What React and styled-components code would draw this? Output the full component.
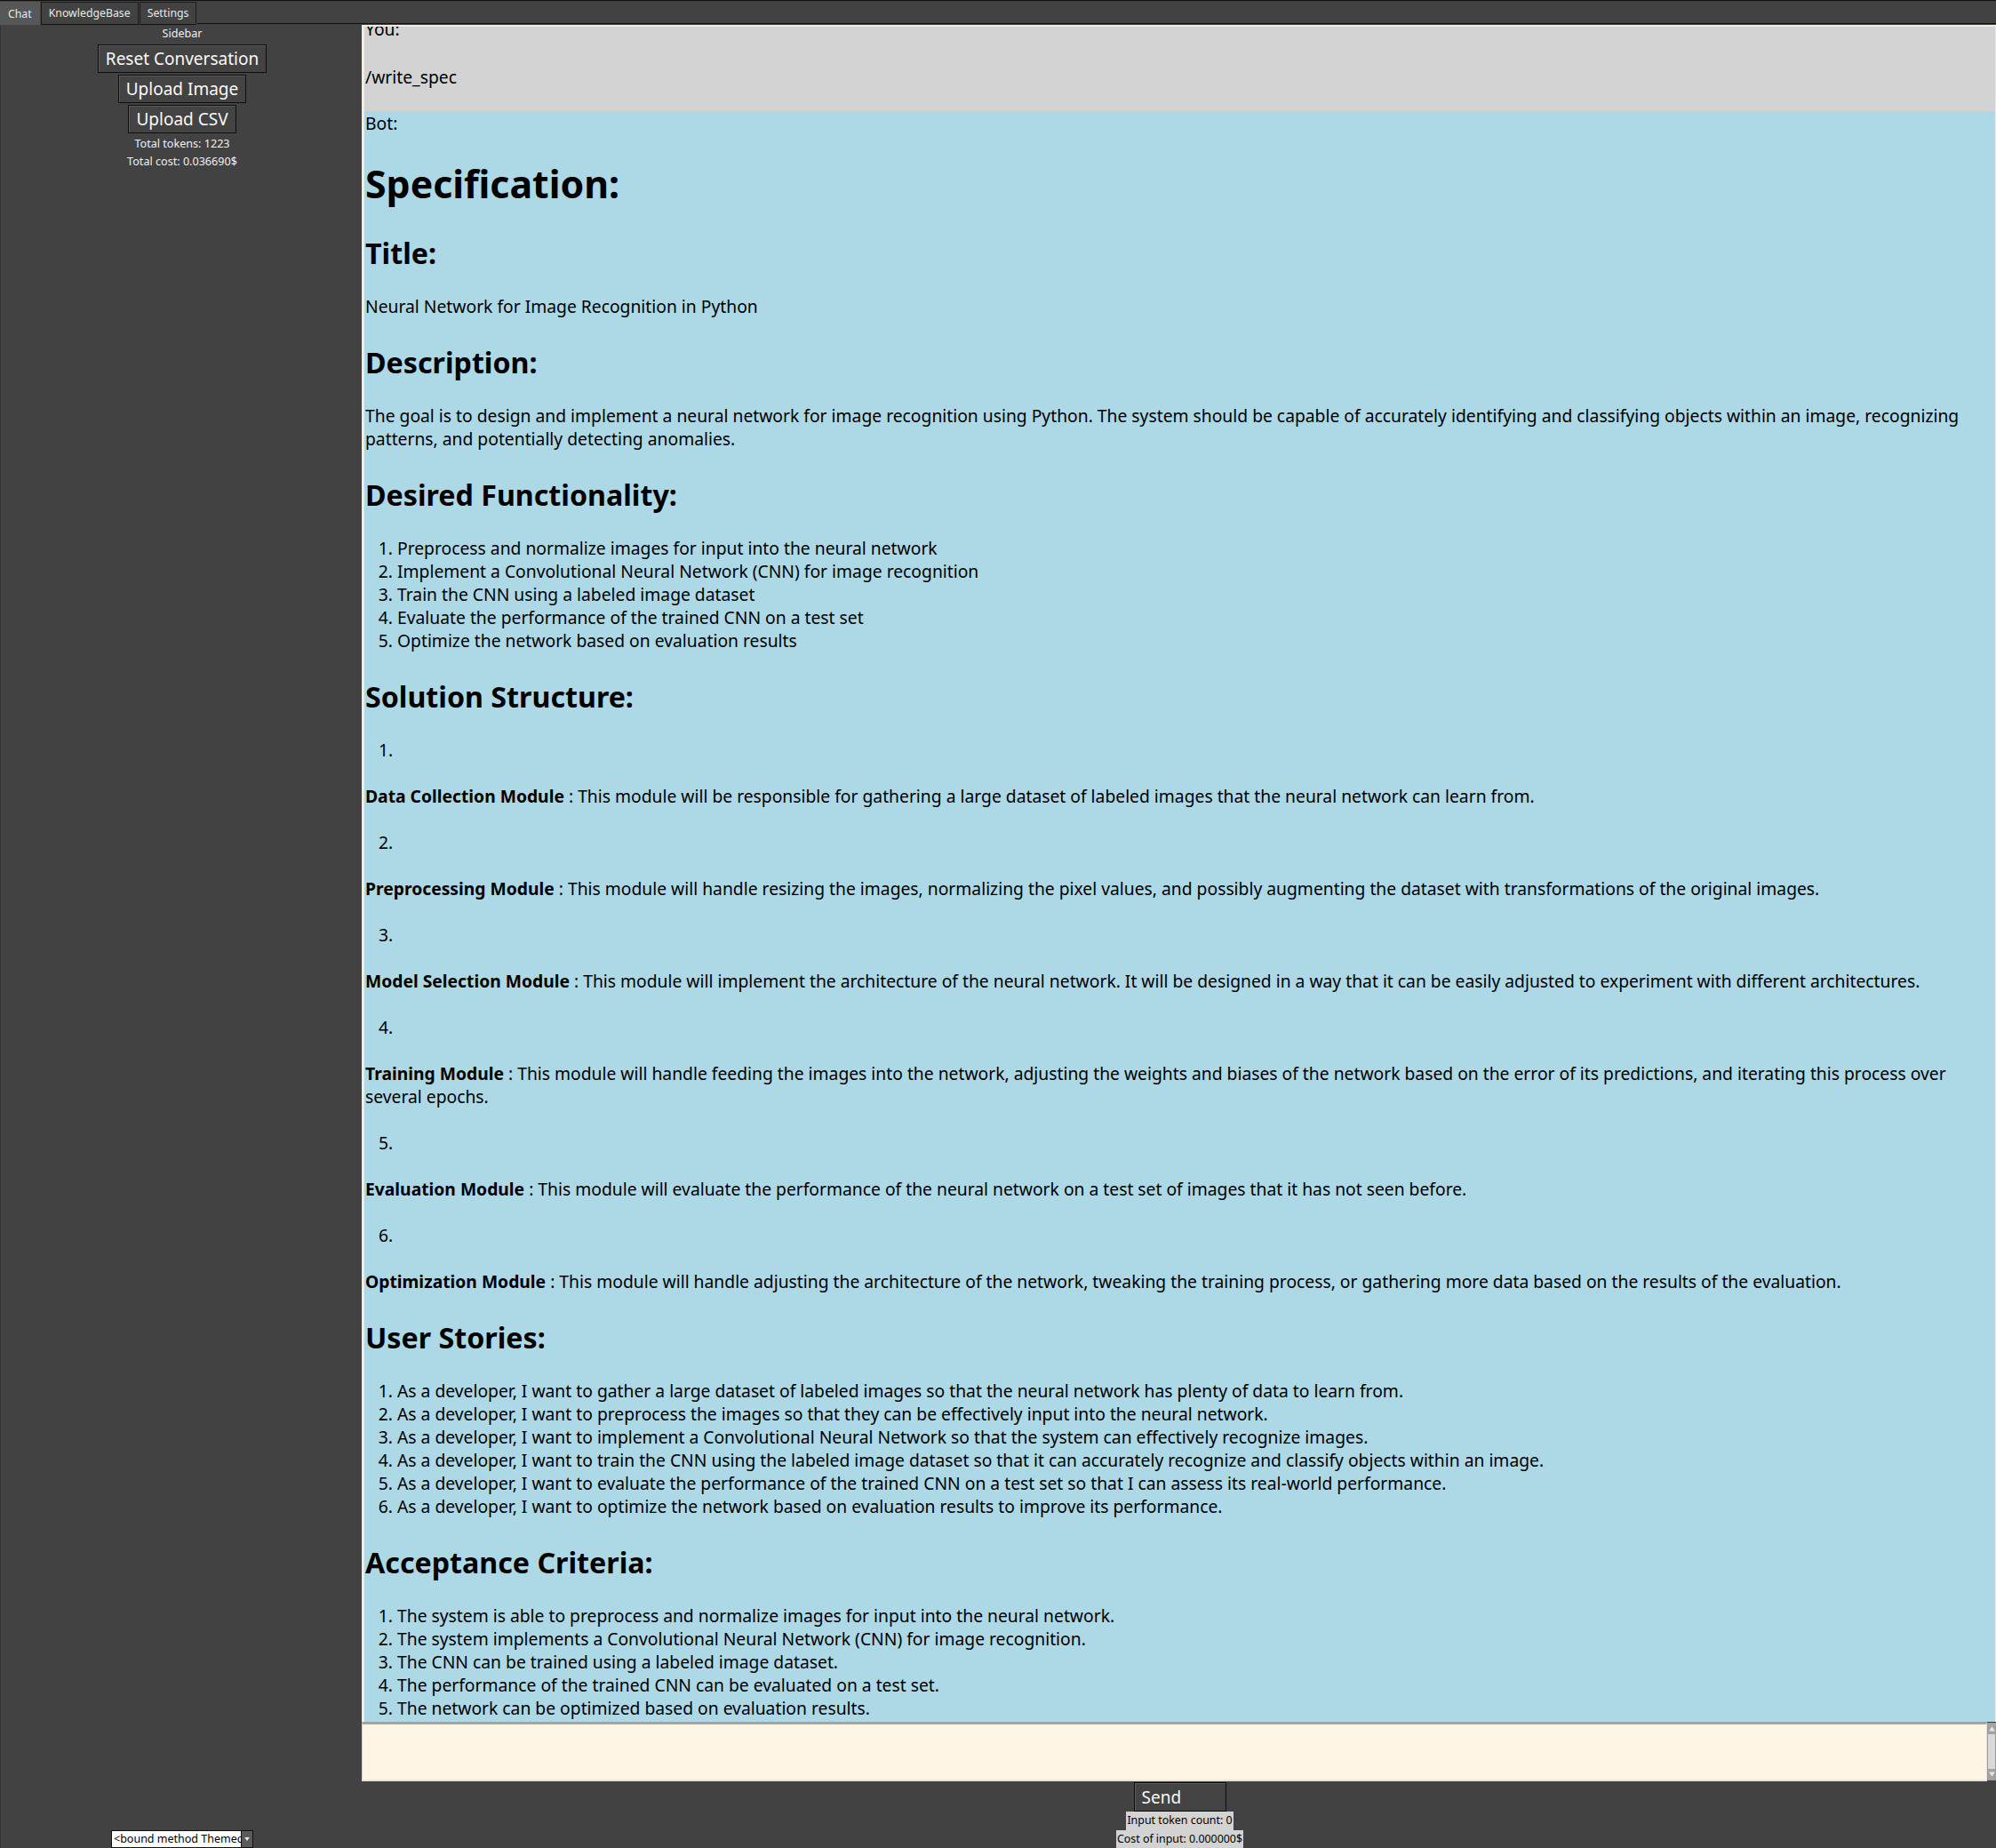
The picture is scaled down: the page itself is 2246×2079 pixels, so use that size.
import React from "react";
import styled, { createGlobalStyle } from "styled-components";

const Global = createGlobalStyle`
  html, body { margin: 0; padding: 0; background: #424242; }
  body { font-family: "Noto Sans", "DejaVu Sans", sans-serif; overflow: hidden; }
  * { box-sizing: border-box; }
`;

const Window = styled.div`
  width: 2246px;
  height: 2079px;
  display: flex;
  flex-direction: column;
  background: #424242;
  overflow: hidden;
`;

const TabBar = styled.div`
  display: flex;
  height: 28px;
  border-top: 1px solid #111;
  flex: none;
`;

const Tab = styled.div`
  display: flex;
  align-items: center;
  padding: 0 8px 1px;
  margin-right: 1px;
  font-size: 12.3px;
  color: #e8e8e8;
  background: ${(p) => (p.$active ? "#575757" : "#424242")};
  border: 1px solid ${(p) => (p.$active ? "#575757" : "#1b1b1b")};
  border-bottom: ${(p) => (p.$active ? "none" : "1px solid #111")};
  margin-top: 1px;
`;

const TabFiller = styled.div`
  flex: 1;
  border-bottom: 1px solid #111;
  margin-bottom: 1px;
`;

const Body = styled.div`
  flex: 1;
  display: flex;
  min-height: 0;
  border-left: 1px solid #333;
`;

const Sidebar = styled.aside`
  width: 405px;
  flex: none;
  display: flex;
  flex-direction: column;
  align-items: center;
  padding-left: 3px;
  color: #f0f0f0;
`;

const SideLabel = styled.div`
  font-size: 12.6px;
  line-height: 20px;
  height: 20px;
  margin-top: ${(p) => p.$gap || 0}px;
`;

const TkButton = styled.button`
  font-family: "Noto Sans", sans-serif;
  font-size: 19px;
  line-height: 24px;
  color: #f9f9f9;
  background: #434343;
  border: 1px solid #0e0e0e;
  box-shadow: inset 1px 1px 0 #5a5a5a;
  padding: 3px 8px;
  margin-top: 2px;
  cursor: pointer;
`;

const SendButton = styled(TkButton)`
  width: 104px;
  height: 33px;
  text-align: left;
  padding: 2px 8px;
  margin-top: 1px;
`;

const Combo = styled.div`
  margin-top: auto;
  display: flex;
  width: 160px;
  height: 20px;
  border: 1px solid #111;
  background: #fff;
`;

const ComboField = styled.div`
  flex: 1;
  font-size: 12.5px;
  line-height: 18px;
  color: #000;
  padding-left: 2px;
  white-space: nowrap;
  overflow: hidden;
`;

const ComboArrow = styled.div`
  width: 13px;
  background: #5a5a5a;
  border-left: 1px solid #111;
  display: flex;
  align-items: center;
  justify-content: center;
`;

const Main = styled.main`
  flex: 1;
  min-width: 0;
  display: flex;
  flex-direction: column;
`;

const ChatView = styled.section`
  flex: 1;
  min-height: 0;
  overflow: hidden;
  margin-left: 1px;
  border-top: 2px solid #f1ece3;
  border-left: 3px solid #f1ece3;
  border-right: 1px solid #f1ece3;
  color: #000;
  font-size: 19.3px;
  line-height: 26px;
`;

const ChatScroll = styled.div`
  margin-top: -10px;
`;

const UserMsg = styled.div`
  background: #d3d3d3;
  padding: 0 1px 25px;
`;

const BotMsg = styled.div`
  background: #add8e6;
  padding: 1px 1px 30px;
`;

const Who = styled.div`
  line-height: 26px;
`;

const Para = styled.p`
  margin: 26px 0 0;
`;

const UserText = styled.p`
  margin: 28px 0 0;
`;

const H1 = styled.h1`
  margin: 26px 0 0;
  font-size: 42.8px;
  line-height: 57px;
  font-weight: 700;
`;

const H2 = styled.h2`
  margin: 28px 0 -1px;
  font-size: 32.2px;
  line-height: 44px;
  font-weight: 700;
`;

const List = styled.ol`
  margin: 26px 0 0;
  padding: 0 0 0 36px;
  li { line-height: 26px; }
`;

const ModuleNumber = styled.div`
  margin-top: 26px;
  padding-left: 15px;
`;

const InputRow = styled.div`
  height: 67px;
  flex: none;
  display: flex;
  margin-left: 1px;
`;

const TextArea = styled.div`
  flex: 1;
  background: #fdf5e6;
  border-top: 3px solid #a8a39b;
  border-left: 1px solid #d9d3c9;
  border-bottom: 2px solid #ebe3d7;
  border-right: 1px solid #ebe3d7;
`;

const Scrollbar = styled.div`
  width: 10px;
  margin-top: 1px;
  margin-bottom: 1px;
  display: flex;
  flex-direction: column;
  background: #d9d9d9;
  border: 1px solid #9a9a9a;
`;

const ScrollArrow = styled.div`
  height: 12px;
  background: #a3a3a3;
  display: flex;
  align-items: center;
  justify-content: center;
`;

const ScrollTrough = styled.div`
  flex: 1;
  background: #d9d9d9;
`;

const Controls = styled.div`
  height: 75px;
  flex: none;
  display: flex;
  flex-direction: column;
  align-items: center;
  padding-left: 3px;
`;

const StatLabel = styled.div`
  background: #d3d3d3;
  color: #000;
  font-size: 12.4px;
  line-height: 20px;
  height: ${(p) => (p.$h || 21)}px;
  padding: 0 1px;
`;

const modules = [
  ["Data Collection Module", "This module will be responsible for gathering a large dataset of labeled images that the neural network can learn from."],
  ["Preprocessing Module", "This module will handle resizing the images, normalizing the pixel values, and possibly augmenting the dataset with transformations of the original images."],
  ["Model Selection Module", "This module will implement the architecture of the neural network. It will be designed in a way that it can be easily adjusted to experiment with different architectures."],
  ["Training Module", "This module will handle feeding the images into the network, adjusting the weights and biases of the network based on the error of its predictions, and iterating this process over several epochs."],
  ["Evaluation Module", "This module will evaluate the performance of the neural network on a test set of images that it has not seen before."],
  ["Optimization Module", "This module will handle adjusting the architecture of the network, tweaking the training process, or gathering more data based on the results of the evaluation."],
];

const functionality = [
  "Preprocess and normalize images for input into the neural network",
  "Implement a Convolutional Neural Network (CNN) for image recognition",
  "Train the CNN using a labeled image dataset",
  "Evaluate the performance of the trained CNN on a test set",
  "Optimize the network based on evaluation results",
];

const stories = [
  "As a developer, I want to gather a large dataset of labeled images so that the neural network has plenty of data to learn from.",
  "As a developer, I want to preprocess the images so that they can be effectively input into the neural network.",
  "As a developer, I want to implement a Convolutional Neural Network so that the system can effectively recognize images.",
  "As a developer, I want to train the CNN using the labeled image dataset so that it can accurately recognize and classify objects within an image.",
  "As a developer, I want to evaluate the performance of the trained CNN on a test set so that I can assess its real-world performance.",
  "As a developer, I want to optimize the network based on evaluation results to improve its performance.",
];

const criteria = [
  "The system is able to preprocess and normalize images for input into the neural network.",
  "The system implements a Convolutional Neural Network (CNN) for image recognition.",
  "The CNN can be trained using a labeled image dataset.",
  "The performance of the trained CNN can be evaluated on a test set.",
  "The network can be optimized based on evaluation results.",
];

const Tri = ({ dir = "down", color = "#eee", w = 7, h = 5 }) => (
  <svg width={w} height={h} viewBox="0 0 7 5">
    {dir === "down" ? (
      <polygon points="0,0 7,0 3.5,5" fill={color} />
    ) : (
      <polygon points="0,5 7,5 3.5,0" fill={color} />
    )}
  </svg>
);

export default function App() {
  return (
    <Window>
      <Global />
      <TabBar>
        <Tab $active>Chat</Tab>
        <Tab>KnowledgeBase</Tab>
        <Tab>Settings</Tab>
        <TabFiller />
      </TabBar>
      <Body>
        <Sidebar>
          <SideLabel>Sidebar</SideLabel>
          <TkButton>Reset Conversation</TkButton>
          <TkButton>Upload Image</TkButton>
          <TkButton>Upload CSV</TkButton>
          <SideLabel $gap={2}>Total tokens: 1223</SideLabel>
          <SideLabel>Total cost: 0.036690$</SideLabel>
          <Combo>
            <ComboField>&lt;bound method Themechanger.get_theme of &lt;__main__.App object&gt;&gt;</ComboField>
            <ComboArrow>
              <Tri color="#eaeaea" w={6} h={4} />
            </ComboArrow>
          </Combo>
        </Sidebar>
        <Main>
          <ChatView>
            <ChatScroll>
              <UserMsg>
                <Who>You:</Who>
                <UserText>/write_spec</UserText>
              </UserMsg>
              <BotMsg>
                <Who>Bot:</Who>
                <H1>Specification:</H1>
                <H2>Title:</H2>
                <Para>Neural Network for Image Recognition in Python</Para>
                <H2>Description:</H2>
                <Para>
                  The goal is to design and implement a neural network for image recognition using Python. The system should be capable of accurately identifying and classifying objects within an image, recognizing patterns, and potentially detecting anomalies.
                </Para>
                <H2>Desired Functionality:</H2>
                <List>
                  {functionality.map((t) => (
                    <li key={t}>{t}</li>
                  ))}
                </List>
                <H2>Solution Structure:</H2>
                {modules.map(([name, text], i) => (
                  <React.Fragment key={name}>
                    <ModuleNumber>{i + 1}.</ModuleNumber>
                    <Para>
                      <strong>{name}</strong> : {text}
                    </Para>
                  </React.Fragment>
                ))}
                <H2>User Stories:</H2>
                <List>
                  {stories.map((t) => (
                    <li key={t}>{t}</li>
                  ))}
                </List>
                <H2>Acceptance Criteria:</H2>
                <List>
                  {criteria.map((t) => (
                    <li key={t}>{t}</li>
                  ))}
                </List>
              </BotMsg>
            </ChatScroll>
          </ChatView>
          <InputRow>
            <TextArea />
            <Scrollbar>
              <ScrollArrow>
                <Tri dir="up" color="#e6e6e6" w={7} h={6} />
              </ScrollArrow>
              <ScrollTrough />
              <ScrollArrow>
                <Tri dir="down" color="#e6e6e6" w={7} h={6} />
              </ScrollArrow>
            </Scrollbar>
          </InputRow>
          <Controls>
            <SendButton>Send</SendButton>
            <StatLabel>Input token count: 0</StatLabel>
            <StatLabel $h={20}>Cost of input: 0.000000$</StatLabel>
          </Controls>
        </Main>
      </Body>
    </Window>
  );
}
